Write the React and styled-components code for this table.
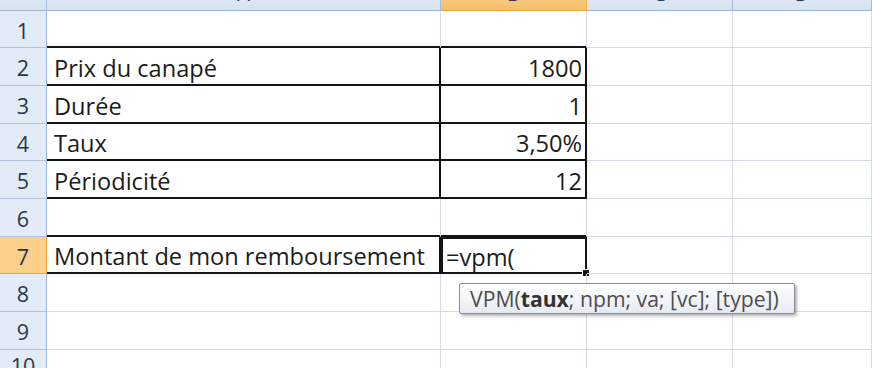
import React from "react";
import styled, { createGlobalStyle, css } from "styled-components";

const GlobalStyle = createGlobalStyle`
  html, body { margin: 0; padding: 0; background: #fff; }
  body { font-family: "Open Sans", Lato, sans-serif; }
`;

const INK = "#141414";
const GRID = "#d5dbe6";

const Viewport = styled.div`
  position: relative;
  width: 872px;
  height: 368px;
  overflow: hidden;
  background: #fff;
`;

const Sheet = styled.div`
  display: grid;
  grid-template-columns: 47px 394px 146px 146px 139px;
  grid-template-rows: 30px ${(p) => p.$rows.map((h) => `${h}px`).join(" ")};
  margin-top: -19px;
`;

const ColHeader = styled.div`
  box-sizing: border-box;
  display: flex;
  align-items: center;
  justify-content: center;
  padding-bottom: 3px;
  font-size: 20px;
  line-height: 20px;
  color: #27374d;
  background: ${(p) => (p.$selected ? "linear-gradient(#f9d99f, #f6c06a)" : "linear-gradient(#e9eff8, #d8e3f1)")};
  border-right: 1px solid ${(p) => (p.$selected ? "#f2b14a" : "#a9bcd4")};
  border-bottom: 1px solid ${(p) => (p.$selected ? "#eda33a" : "#9fb4cf")};
`;

const RowHeader = styled.div`
  box-sizing: border-box;
  display: flex;
  align-items: center;
  justify-content: center;
  padding-top: 2px;
  font-size: 21.5px;
  color: #27374d;
  background: ${(p) => (p.$selected ? "#fbd08a" : "#e3ebf6")};
  border-right: 1px solid ${(p) => (p.$selected ? "#eda33a" : "#9fb4cf")};
  border-bottom: 1px solid ${(p) => (p.$selected ? "#eda33a" : "#b5c6dc")};
`;

const Cell = styled.div`
  position: relative;
  box-sizing: border-box;
  display: flex;
  align-items: center;
  justify-content: ${(p) => (p.$num ? "flex-end" : "flex-start")};
  padding: 2px ${(p) => (p.$num ? "4px" : "0")} 0 ${(p) => (p.$num ? "0" : "7px")};
  font-size: 23.6px;
  color: #1c1c1c;
  white-space: nowrap;
  border-right: 1px solid ${(p) => (p.$right ? INK : GRID)};
  border-bottom: 1px solid ${(p) => (p.$bottom ? INK : GRID)};
  box-shadow: ${(p) =>
    [p.$right && `inset -1px 0 0 ${INK}`, p.$bottom && `inset 0 -1px 0 ${INK}`]
      .filter(Boolean)
      .join(", ") || "none"};

  ${(p) =>
    p.$active &&
    css`
      padding-left: 4px;
      border: 1px solid ${INK};
      box-shadow: inset 0 0 0 1px ${INK};
      &::after {
        content: "";
        position: absolute;
        right: -4px;
        bottom: -4px;
        width: 6px;
        height: 6px;
        background: ${INK};
        border: 1px solid #fff;
      }
    `}
`;

const Tip = styled.div`
  position: absolute;
  left: 459px;
  top: 283px;
  box-sizing: border-box;
  height: 31px;
  padding: 0 15px 0 10px;
  display: flex;
  align-items: center;
  font-size: 21.2px;
  color: #4d4d4d;
  white-space: nowrap;
  background: linear-gradient(#ffffff, #e6ebf3);
  border: 1px solid #8a8f96;
  border-radius: 2px;
  box-shadow: 2px 2px 3px rgba(0, 0, 0, 0.3);

  b { color: #333; font-weight: 700; }
`;

const rowHeights = [37, 38, 38, 37, 38, 38, 37, 38, 38, 30];

const rows = [
  { n: 1, a: "", b: "", top: true },
  { n: 2, a: "Prix du canapé", b: "1800", box: true },
  { n: 3, a: "Durée", b: "1", box: true },
  { n: 4, a: "Taux", b: "3,50%", box: true },
  { n: 5, a: "Périodicité", b: "12", box: true },
  { n: 6, a: "", b: "", top: true },
  { n: 7, a: "Montant de mon remboursement", b: "=vpm(", edit: true },
  { n: 8 },
  { n: 9 },
  { n: 10 },
];

export default function App() {
  return (
    <Viewport>
      <GlobalStyle />
      <Sheet $rows={rowHeights}>
        <ColHeader />
        <ColHeader>A</ColHeader>
        <ColHeader $selected>B</ColHeader>
        <ColHeader>C</ColHeader>
        <ColHeader>D</ColHeader>
        {rows.map((r) => (
          <React.Fragment key={r.n}>
            <RowHeader $selected={r.edit}>{r.n}</RowHeader>
            <Cell $bottom={r.top || r.box || r.edit} $right={r.box || r.edit}>
              {r.a}
            </Cell>
            {r.edit ? (
              <Cell $active>{r.b}</Cell>
            ) : (
              <Cell $num $bottom={r.top || r.box} $right={r.box}>
                {r.b}
              </Cell>
            )}
            <Cell />
            <Cell />
          </React.Fragment>
        ))}
      </Sheet>
      <Tip>
        VPM(<b>taux</b>; npm; va; [vc]; [type])
      </Tip>
    </Viewport>
  );
}
